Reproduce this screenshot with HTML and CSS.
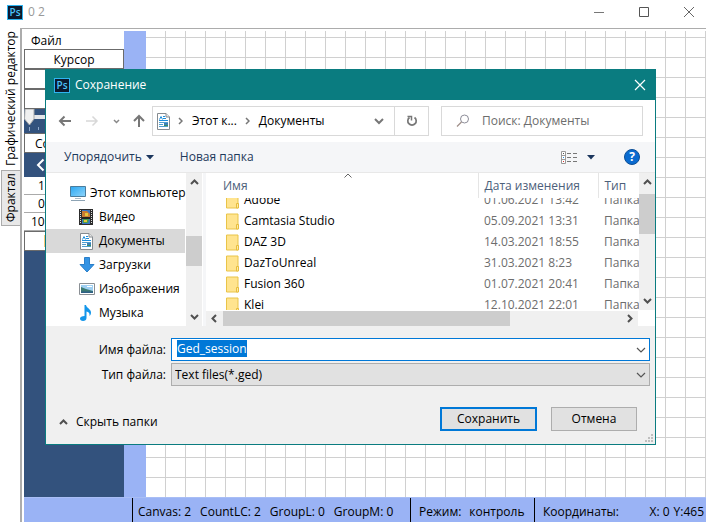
FILE: index.html
```html
<!DOCTYPE html>
<html lang="ru">
<head>
<meta charset="utf-8">
<title>0 2</title>
<link rel="stylesheet" href="styles.css">
</head>
<body>
<svg width="0" height="0" class="defs" aria-hidden="true">
  <defs>
    <symbol id="doc" viewBox="0 0 14 17">
      <path d="M1.500 .5h8.500l3.500 3.500v12.500h-12z" fill="#fff" stroke="#858b90"/>
      <path d="M10 .5v3.500h3.500" fill="#e8e8e8" stroke="#858b90"/>
      <path d="M3.500 6.500l1.500-3 1.500 3M7 3.500h2M7 5.500h3M3 7.500h9" stroke="#1c8edc" fill="none"/>
      <path d="M3 9.500h9M3 11.500h4M3 13.500h9" stroke="#4f9fd0" fill="none"/>
      <path d="M8 10h4v3h-4z" fill="#3b7fb8"/><path d="M8 12h4v1h-4z" fill="#3f8f5b"/>
    </symbol>
    <symbol id="folder" viewBox="0 0 14 17">
      <path d="M.5 1h11.500v15h-11.500z" fill="#ffe48f" stroke="#e9c448"/>
      <path d="M10.500 16v-4.500h2v4.500z" fill="#ffe9a3" stroke="#e6bd3c"/>
    </symbol>
    <symbol id="up" viewBox="0 0 9 6"><path d="M1 5l3.500-3.500L8 5" fill="none" stroke="#505050" stroke-width="2"/></symbol>
    <symbol id="down" viewBox="0 0 9 6"><path d="M1 1l3.500 3.500L8 1" fill="none" stroke="#505050" stroke-width="2"/></symbol>
    <symbol id="left" viewBox="0 0 6 9"><path d="M5 1L1.500 4.500L5 8" fill="none" stroke="#505050" stroke-width="2"/></symbol>
    <symbol id="right" viewBox="0 0 6 9"><path d="M1 1l3.500 3.500L1 8" fill="none" stroke="#505050" stroke-width="2"/></symbol>
  </defs>
</svg>

<div class="app">
  <header class="titlebar">
    <span class="ps">Ps</span>
    <span class="title">0 2</span>
    <div class="winbtns">
      <button type="button" aria-label="Свернуть"><svg width="12" height="12"><path d="M1 6.500h10" stroke="#777"/></svg></button>
      <button type="button" aria-label="Развернуть"><svg width="12" height="12"><path d="M1.500 1.500h9v9h-9z" fill="none" stroke="#555"/></svg></button>
      <button type="button" aria-label="Закрыть"><svg width="12" height="12"><path d="M1 1l10 10M11 1L1 11" stroke="#666"/></svg></button>
    </div>
  </header>

  <div class="body">
    <nav class="tabs">
      <button type="button" class="tab active">Графический редактор</button>
      <button type="button" class="tab">Фрактал</button>
    </nav>
    <div class="page">
      <div class="work">
        <aside class="tools">
          <button type="button" class="menu">Файл</button>
          <button type="button" class="tool">Курсор</button>
          <button type="button" class="tool" aria-label="Инструмент"></button>
          <button type="button" class="tool" aria-label="Инструмент"></button>
          <div class="slider">
            <svg width="100" height="24"><path d="M8 6h88v4h-88z" fill="#e4e6e9"/><path d="M1 0h9v10l-4.500 6l-5-6z" fill="#f0f0f0" stroke="#aaa"/><path d="M5.500 18v4M14.500 18v3M23.500 18v3" stroke="#8ea6c8"/></svg>
          </div>
          <button type="button" class="tool start">Со</button>
          <div class="arrow"><svg width="9" height="14"><path d="M7.500 1.500L2 7l5.500 5.500" fill="none" stroke="#fff" stroke-width="2"/></svg></div>
          <input class="num" value="1" aria-label="Толщина">
          <input class="num" value="0" aria-label="Угол">
          <input class="num wide" value="100" aria-label="Масштаб">
          <button type="button" class="tool color" aria-label="Цвет"><span class="swatch"></span></button>
        </aside>
        <div class="ruler"></div>
        <main class="canvas"></main>
      </div>
      <footer class="status">
        <div class="cell pad"></div>
        <div class="cell counts"><span>Canvas: 2</span><span>CountLC: 2</span><span>GroupL: 0</span><span>GroupM: 0</span></div>
        <div class="cell mode"><span>Режим:</span><span>контроль</span></div>
        <div class="cell coords"><span>Координаты:</span><span class="xy"><span>X: 0</span><span>Y:465</span></span></div>
      </footer>
    </div>
  </div>
</div>

<section class="dialog" role="dialog" aria-label="Сохранение">
  <header class="dlg-title">
    <span class="ps">Ps</span>
    <span class="name">Сохранение</span>
    <button type="button" aria-label="Закрыть"><svg width="12" height="12"><path d="M1 1l10 10M11 1L1 11" stroke="#fff" stroke-width="1.200"/></svg></button>
  </header>

  <div class="nav">
    <div class="history">
      <button type="button" aria-label="Назад"><svg width="14" height="12"><path d="M13 6H2M6.500 1.500L2 6l4.500 4.500" fill="none" stroke="#777" stroke-width="2"/></svg></button>
      <button type="button" aria-label="Вперёд"><svg width="14" height="12"><path d="M1 6h11M7.500 1.500L12 6l-4.500 4.500" fill="none" stroke="#d8d8d8" stroke-width="1.500"/></svg></button>
      <button type="button" aria-label="Недавние"><svg width="7" height="5"><path d="M1 1l2.500 2.500L6 1" fill="none" stroke="#888" stroke-width="1.500"/></svg></button>
      <button type="button" aria-label="Вверх"><svg width="12" height="14"><path d="M6 13V2M1 7l5-5l5 5" fill="none" stroke="#777" stroke-width="2"/></svg></button>
    </div>
    <div class="address">
      <svg width="14" height="17"><use href="#doc"/></svg>
      <svg class="sep" width="5" height="8"><path d="M1 1l3 3l-3 3" fill="none" stroke="#777" stroke-width="1.500"/></svg>
      <button type="button" class="crumb first">Этот к...</button>
      <svg class="sep" width="5" height="8"><path d="M1 1l3 3l-3 3" fill="none" stroke="#777" stroke-width="1.500"/></svg>
      <button type="button" class="crumb">Документы</button>
      <button type="button" class="drop" aria-label="Предыдущие расположения"><svg width="10" height="7"><path d="M1 1l4 4l4-4" fill="none" stroke="#777" stroke-width="2"/></svg></button>
      <button type="button" class="refresh" aria-label="Обновить"><svg width="12" height="12"><path d="M8.500 2.500A4.200 4.200 0 1 1 3.500 2.500" fill="none" stroke="#777" stroke-width="1.700"/><path d="M1.500 1.500h4v4" fill="none" stroke="#777" stroke-width="1.500"/></svg></button>
    </div>
    <label class="search">
      <svg width="14" height="14"><circle cx="8.500" cy="5" r="4" fill="none" stroke="#8d8d98"/><path d="M5.500 8L1 12.500" stroke="#a08f8a" stroke-width="1.300"/></svg>
      <input type="text" placeholder="Поиск: Документы" aria-label="Поиск">
    </label>
  </div>

  <div class="toolbar">
    <button type="button">Упорядочить<svg width="8" height="5"><path d="M0 0h8L4 4.500z" fill="#1b365d"/></svg></button>
    <button type="button">Новая папка</button>
    <div class="view">
      <button type="button" aria-label="Вид"><svg width="17" height="13"><path d="M.5 .5h4v12h-4zM.5 4.500h4M.5 8.500h4" fill="#fff" stroke="#999"/><path d="M2 2h1v1h-1z" fill="#555"/><path d="M2 6h1v1h-1z" fill="#268de6"/><path d="M2 10h1v1h-1z" fill="#d33"/><path d="M6 2.500h4M12 2.500h4M6 6.500h4M12 6.500h4M6 10.500h4M12 10.500h4" stroke="#777"/></svg></button>
      <button type="button" aria-label="Другие виды"><svg width="8" height="5"><path d="M0 0h8L4 4.500z" fill="#1b365d"/></svg></button>
      <button type="button" class="help" aria-label="Справка">?</button>
    </div>
  </div>

  <div class="browser">
    <ul class="tree">
      <li class="root"><svg width="16" height="16"><defs><linearGradient id="scr" x2="1" y2="1"><stop stop-color="#2aa7f2"/><stop offset="1" stop-color="#8fd5fb"/></linearGradient></defs><path d="M.5 1.500h15v10h-15z" fill="url(#scr)" stroke="#4b7c9c"/><path d="M5 13.500h6" stroke="#a9bcc8"/><path d="M1 15.500h14" stroke="#8ea4b5"/></svg>Этот компьютер</li>
      <li><svg width="14" height="16"><path d="M0 0h14v16H0z" fill="#2c2c2c"/><path d="M3 1h8v14H3z" fill="#3a75c4"/><path d="M3 2h5l3 3v3H3z" fill="#c97b35"/><path d="M3 8h8v2H3z" fill="#222"/><path d="M4 10h6l-1 4H4z" fill="#4c9d4c"/><path d="M6 4h3v3H6zM5 11h3v2H5z" fill="#e6c63c"/><path d="M1.500 1v14M12.500 1v14" stroke="#ddd" stroke-dasharray="1 1"/></svg>Видео</li>
      <li class="sel"><svg width="14" height="17"><use href="#doc"/></svg>Документы</li>
      <li><svg width="16" height="16"><path d="M5.500 .5h5v7h4.500L8 15L1 7.500h4.500z" fill="#3393e4" stroke="#2a7fc9"/></svg>Загрузки</li>
      <li><svg width="16" height="12"><path d="M.5 .5h15v11H.5z" fill="#fff" stroke="#8a8f94"/><path d="M2 2h12v8H2z" fill="#9fd0f3"/><path d="M2 4l5 2l7 2v2H2z" fill="#3c7a72"/><path d="M2 8.500h12V10H2z" fill="#2e5f86"/><path d="M8 3h5v1H8z" fill="#fff"/></svg>Изображения</li>
      <li><svg width="14" height="16"><path d="M5.500 0h1.500c.5 3 5 4 5 7.500c0 1.500-.5 2.500-1.500 3.500c.5-3-1-4-3-4.500V13c0 1.700-1.500 3-3.500 3S1 15 1 13.500S3 11 5.500 11z" fill="#1496ea"/></svg>Музыка</li>
    </ul>
    <div class="vbar tree-bar"><svg width="9" height="6"><use href="#up"/></svg><span class="thumb"></span><svg width="9" height="6"><use href="#down"/></svg></div>
    <div class="files">
      <div class="upper">
        <div class="listing">
          <svg class="sort" width="8" height="5"><path d="M.5 4.500L4 1l3.500 3.500" fill="none" stroke="#666"/></svg>
          <table>
            <colgroup><col><col class="c-date"><col class="c-type"></colgroup>
            <thead><tr><th>Имя</th><th>Дата изменения</th><th>Тип</th></tr></thead>
            <tbody>
              <tr class="cut"><td><div><svg width="14" height="17"><use href="#folder"/></svg>Adobe</div></td><td><div>01.06.2021 13:42</div></td><td><div>Папка</div></td></tr>
              <tr><td><div><svg width="14" height="17"><use href="#folder"/></svg>Camtasia Studio</div></td><td><div>05.09.2021 13:31</div></td><td><div>Папка</div></td></tr>
              <tr><td><div><svg width="14" height="17"><use href="#folder"/></svg>DAZ 3D</div></td><td><div>14.03.2021 18:55</div></td><td><div>Папка</div></td></tr>
              <tr><td><div><svg width="14" height="17"><use href="#folder"/></svg>DazToUnreal</div></td><td><div>31.03.2021 8:23</div></td><td><div>Папка</div></td></tr>
              <tr><td><div><svg width="14" height="17"><use href="#folder"/></svg>Fusion 360</div></td><td><div>01.07.2021 20:41</div></td><td><div>Папка</div></td></tr>
              <tr><td><div><svg width="14" height="17"><use href="#folder"/></svg>Klei</div></td><td><div>12.10.2021 22:01</div></td><td><div>Папка</div></td></tr>
            </tbody>
          </table>
        </div>
        <div class="vbar list-bar"><svg width="9" height="6"><use href="#up"/></svg><span class="thumb"></span><svg width="9" height="6"><use href="#down"/></svg></div>
      </div>
      <div class="hbar"><svg width="6" height="9"><use href="#left"/></svg><span class="track"><span class="thumb"></span></span><svg width="6" height="9"><use href="#right"/></svg></div>
    </div>
  </div>

  <form class="fields">
    <label for="fname">Имя файла:</label>
    <div class="combo"><input id="fname" type="text" value="Ged_session" autocomplete="off"><svg width="10" height="6"><path d="M1 1l4 4l4-4" fill="none" stroke="#555" stroke-width="1.200"/></svg></div>
    <label for="ftype">Тип файла:</label>
    <div class="combo"><select id="ftype"><option>Text files(*.ged)</option></select><svg width="10" height="6"><path d="M1 1l4 4l4-4" fill="none" stroke="#555" stroke-width="1.200"/></svg></div>
  </form>

  <footer class="actions">
    <button type="button" class="hide"><svg width="9" height="6"><use href="#up"/></svg>Скрыть папки</button>
    <button type="button" class="btn primary">Сохранить</button>
    <button type="button" class="btn cancel">Отмена</button>
    <svg class="grip" width="8" height="8"><path d="M6 0h2v2H6zM3 3h2v2H3zM6 3h2v2H6zM0 6h2v2H0zM3 6h2v2H3zM6 6h2v2H6z" fill="#bfbfbf"/></svg>
  </footer>
</section>
<script src="script.js"></script>
</body>
</html>
```
FILE: script.js
```js
const nameField = document.getElementById('fname');
nameField.focus();
nameField.select();
```
FILE: styles.css
```css
* { box-sizing: border-box; }
body {
  margin: 0;
  font: 12px/16px "Open Sans", "Noto Sans", sans-serif;
  color: #000;
  background: #fff;
}
button, input, select { font: inherit; color: inherit; }
button { border: 0; padding: 0; background: none; }
svg { flex: none; display: block; }
.defs { position: absolute; }

.app { height: 100vh; display: flex; flex-direction: column; overflow: hidden; }
.titlebar { height: 28px; flex: none; display: flex; align-items: center; padding: 0 11px 4px 7px; color: #999; }
.ps {
  width: 16px; height: 15px; flex: none;
  border: 1px solid #2fb4f0; background: #0b1a2e; color: #4cc4fa;
  font-size: 10px; font-weight: 600; line-height: 12px; text-align: center;
}
.title { margin-left: 5px; }
.winbtns { margin-left: auto; display: flex; gap: 33px; }

.body { flex: 1; display: flex; min-height: 0; }
.tabs { width: 20px; flex: none; display: flex; flex-direction: column; padding-left: 1px; }
.tab {
  writing-mode: vertical-rl; transform: rotate(180deg);
  width: 19px; height: 56px; border: 1px solid #acacac; border-left: 0; background: #e8e8e8;
  white-space: nowrap; text-align: center;
}
.tab.active { height: 142px; background: #fff; border-color: transparent; }
.page {
  flex: 1; min-width: 0; display: flex; flex-direction: column;
  border-left: 2px solid #acacac; border-top: 1px solid #acacac; padding: 2px 0 0 2px;
}
.work { flex: 1; display: flex; min-height: 0; }
.tools { width: 100px; flex: none; background: #33527d; display: flex; flex-direction: column; }
.tools > * { width: 100%; flex: none; }
.menu { height: 18px; padding: 2px 0 0 7px; text-align: left; background: #fff; }
.tool { height: 20px; padding-top: 1px; border: 1px solid #6b6b6b; background: #fff; }
.tool.start { text-align: left; padding-left: 10px; }
.slider { height: 24px; }
.arrow { height: 24px; padding: 5px 0 0 12px; }
.num { height: 18px; border: 0; border-bottom: 1px solid #aaa; padding: 0 0 0 14px; background: #fff; }
.num.wide { padding-left: 7px; }
.tool.color { display: flex; padding: 3px 0 0 19px; }
.swatch { width: 60px; height: 12px; background: #f7c978; }
.ruler { width: 22px; flex: none; background: #9ab3f5; }
.canvas {
  flex: 1;
  background-image: linear-gradient(#d0d0d0 1px, transparent 1px), linear-gradient(90deg, #d0d0d0 1px, transparent 1px);
  background-size: 20px 20px;
  background-position: 19px 6px;
}
.status { height: 25px; flex: none; display: flex; background: #9ab3f5; border-top: 1px solid #a9bef5; white-space: nowrap; }
.cell { display: flex; align-items: center; padding: 3px 2px 0 5px; }
.cell + .cell { border-left: 1px solid #000; }
.cell.pad { width: 108px; flex: none; }
.counts { width: 278px; gap: 9px; }
.mode { width: 124px; padding-left: 8px; gap: 8px; }
.coords { flex: 1; padding-left: 8px; justify-content: space-between; }
.xy { display: flex; gap: 4px; }

.dialog {
  position: absolute; left: 45px; right: 50px; top: 69px;
  border: 1px solid #0a7c80; background: #f0f0f0;
}
.dlg-title { height: 30px; display: flex; align-items: center; padding: 0 9px 0 8px; background: #0a7c80; color: #fff; }
.dlg-title .name { margin-left: 5px; }
.dlg-title button { margin-left: auto; }

.nav { height: 42px; display: flex; align-items: center; padding: 0 12px; background: #fff; }
.history { width: 94px; flex: none; display: flex; align-items: center; justify-content: space-between; padding: 0 7px 0 0; }
.address { flex: 1; height: 30px; min-width: 0; display: flex; align-items: center; border: 1px solid #d9d9d9; padding-left: 3px; }
.address .sep { margin: 0 9px 0 8px; }
.crumb { white-space: nowrap; }
.drop { margin-left: auto; padding: 0 10px; }
.refresh { width: 34px; height: 28px; border-left: 1px solid #d9d9d9; padding-left: 11px; }
.search { width: 202px; height: 30px; min-width: 0; margin-left: 12px; display: flex; align-items: center; gap: 12px; border: 1px solid #d9d9d9; padding-left: 14px; }
.search input { width: 100%; min-width: 0; border: 0; padding: 0; outline: 0; background: none; }
.search input::placeholder { color: #6d6d6d; opacity: 1; }

.toolbar { height: 31px; display: flex; align-items: center; gap: 26px; padding: 0 15px 0 18px; background: #f5f6f8; border-bottom: 1px solid #e8e8e8; color: #1e395b; }
.toolbar button { display: flex; align-items: center; gap: 4px; }
.view { margin-left: auto; display: flex; align-items: center; gap: 9px; }
.toolbar .help { width: 16px; height: 16px; margin-left: 20px; border-radius: 50%; border: 1px solid #0d4f96; background: #0a6bd0; color: #fff; font-weight: 700; justify-content: center; }

.browser { height: 153px; display: flex; background: #fff; }
.tree { width: 140px; flex: none; margin: 0; padding: 8px 0 0; list-style: none; overflow: hidden; }
.tree li { height: 24px; display: flex; align-items: center; gap: 6px; width: 139px; padding-left: 33px; white-space: nowrap; }
.tree li svg { width: 14px; overflow: visible; }
.tree .root { padding-left: 24px; }
.tree .sel { background: #d9d9d9; }
.vbar { width: 16px; flex: none; background: #f0f0f0; display: flex; flex-direction: column; align-items: center; padding: 6px 0; }
.thumb { background: #cdcdcd; }
.vbar .thumb { width: 100%; }
.vbar svg:last-child { margin-top: auto; }
.tree-bar .thumb { height: 30px; margin-top: 51px; }
.list-bar .thumb { height: 40px; margin-top: 9px; }
.files { flex: 1; min-width: 0; display: flex; flex-direction: column; margin-left: 1px; border-left: 3px solid #f5f6f8; }
.upper { display: flex; height: 138px; padding-bottom: 1px; }
.listing { flex: 1; min-width: 0; overflow: hidden; position: relative; }
.sort { position: absolute; left: 138px; top: 0; }
.listing table { width: 100%; border-collapse: collapse; table-layout: fixed; }
.c-date { width: 120px; }
.c-type { width: 41px; }
th { height: 25px; padding: 0 0 0 6px; text-align: left; font-weight: 400; color: #4c607a; white-space: nowrap; }
th + th { border-left: 1px solid #e5e5e5; }
th:first-child { padding-left: 17px; }
td { padding: 0 0 0 6px; color: #6d6d6d; }
td:first-child { padding-left: 20px; color: #000; }
td div { height: 21px; display: flex; align-items: center; gap: 4px; padding-bottom: 1px; white-space: nowrap; overflow: hidden; }
.cut div { height: 13px; align-items: flex-end; padding-bottom: 3px; overflow: clip; }
.cut svg { margin-bottom: -1px; }
.hbar { height: 15px; margin-right: 17px; background: #f0f0f0; display: flex; align-items: center; padding: 0 5px; gap: 6px; }
.track { flex: 1; height: 15px; display: flex; }
.track .thumb { width: 72%; }

.fields { display: grid; grid-template-columns: 120px 1fr; column-gap: 5px; row-gap: 2px; align-items: center; padding: 12px 5px 0 0; }
.fields label { text-align: right; }
.combo { position: relative; }
.combo svg { position: absolute; right: 4px; top: 9px; pointer-events: none; }
.combo input, .combo select { display: block; width: 100%; height: 23px; border: 1px solid #0078d7; padding: 0 20px 2px 5px; outline: 0; background: #fff; border-radius: 0; appearance: none; }
.combo select { border-color: #adadad; background: #e1e1e1; padding: 0 20px 0 3px; }
.combo input::selection { background: #0078d7; color: #fff; }

.actions { position: relative; display: flex; align-items: center; gap: 14px; padding: 21px 18px 13px 13px; }
.hide { display: flex; align-items: center; gap: 8px; margin-right: auto; padding-top: 6px; }
.btn { height: 24px; width: 86px; border: 1px solid #adadad; background: #e1e1e1; }
.btn.primary { width: 97px; border: 2px solid #0078d7; }
.grip { position: absolute; right: 2px; bottom: 2px; }
```
